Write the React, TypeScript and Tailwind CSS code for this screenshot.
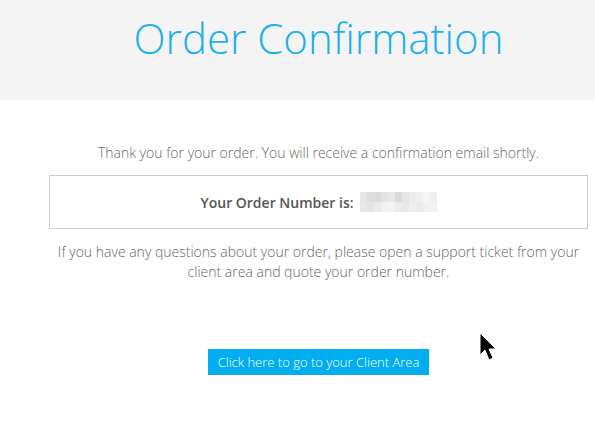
import React from 'react';

const blurBlocks = [
  ['#e6e6e6', '#dcdcdc', '#dcdcdc', '#e4e4e4', '#e8e8e8', '#dadada', '#e6e6e6', '#ececec', '#f0f0f0', '#f4f4f4', '#eeeeee'],
  ['#e8e8e8', '#e4e4e4', '#eaeaea', '#f2f2f2', '#f4f4f4', '#ececec', '#e8e8e8', '#eeeeee', '#eaeaea', '#f0f0f0', '#f2f2f2'],
];

const App: React.FC = () => {
  return (
    <div className="relative w-full h-[427px] overflow-hidden bg-white font-['Open_Sans',sans-serif]">
      <div className="w-[637px]">
        {/* Header */}
        <div className="h-[100px] bg-[#f4f4f4] pt-[17px] text-center">
          <h1 className="text-[42px] leading-none font-light text-[#1ab0ec]">Order Confirmation</h1>
        </div>

        {/* Content */}
        <div className="px-[49px] text-center">
          <p className="mt-[43px] text-[14px] leading-[20px] font-light text-[#666]">
            Thank you for your order. You will receive a confirmation email shortly.
          </p>

          <div className="mt-[12px] h-[54px] border border-[#cccccc] flex items-center justify-center">
            <span className="text-[14px] font-semibold text-[#555]">Your Order Number is:</span>
            <span className="ml-[6px] flex flex-col">
              {blurBlocks.map((row, i) => (
                <span key={i} className="flex">
                  {row.map((c, j) => (
                    <span key={j} className="w-[7px] h-[10px]" style={{ backgroundColor: c }} />
                  ))}
                </span>
              ))}
            </span>
          </div>

          <p className="mt-[13px] text-[14px] leading-[20px] font-light text-[#666]">
            If you have any questions about your order, please open a support ticket from your client area and quote your order number.
          </p>

          <div className="mt-[67px]">
            <button className="h-[26px] px-[10px] bg-[#00aeef] text-white text-[13px] leading-[26px] font-light">
              Click here to go to your Client Area
            </button>
          </div>
        </div>
      </div>

      {/* Mouse cursor */}
      <svg className="absolute left-[479px] top-[332px]" width="22" height="32" viewBox="0 0 22 32">
        <path d="M1 1 L1 23 L6 18 L10 28 L14 26 L10 17 L17 17 Z" fill="#000" stroke="#fff" strokeWidth="1" />
      </svg>
    </div>
  );
};

export default App;
